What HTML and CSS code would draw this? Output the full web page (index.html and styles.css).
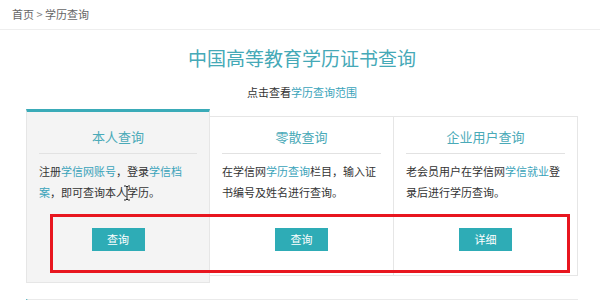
FILE: index.html
```html
<!DOCTYPE html>
<html lang="zh-CN">
<head>
    <meta charset="UTF-8">
    <meta name="viewport" content="width=device-width, initial-scale=1.0">
    <title>学历查询</title>
    <link rel="stylesheet" href="styles.css">
</head>
<body>

<div class="crumb">
    <a href="#">首页</a> &gt; <span>学历查询</span>
</div>

<div class="container">
    <h1>中国高等教育学历证书查询</h1>
    <p class="sub">点击查看<a href="#">学历查询范围</a></p>

    <div class="cards">
        <div class="card active">
            <h2>本人查询</h2>
            <p>注册<a href="#">学信网账号</a>，登录<a href="#">学信档<br>案</a>，即可查询本人学历。</p>
            <a class="btn" href="#">查询</a>
            <!-- text cursor left in the capture -->
            <svg class="cursor" width="8" height="16" viewBox="0 0 8 16">
                <path d="M1 1h2l1 1 1-1h2M4 2v12M1 15h2l1-1 1 1h2" fill="none" stroke="#222" stroke-width="1"/>
            </svg>
        </div>
        <div class="card">
            <h2>零散查询</h2>
            <p>在学信网<a href="#">学历查询</a>栏目，输入证书编号及姓名进行查询。</p>
            <a class="btn" href="#">查询</a>
        </div>
        <div class="card">
            <h2>企业用户查询</h2>
            <p>老会员用户在学信网<a href="#">学信就业</a>登录后进行学历查询。</p>
            <a class="btn" href="#">详细</a>
        </div>
        <div class="mark"></div>
    </div>

    <div class="next"></div>
</div>

</body>
</html>
```

FILE: styles.css
```css
body {
    margin: 0;
    font-family: "Noto Sans CJK SC", "Noto Sans", sans-serif;
    color: #333;
    background: #fff;
}
a {
    color: #3aa3ba;
    text-decoration: none;
}
.crumb {
    height: 29px;
    line-height: 28px;
    padding-left: 12px;
    font-size: 11px;
    color: #888;
    border-bottom: 1px solid #eee;
}
.crumb a,
.crumb span {
    color: #666;
}
.container {
    margin: 0 22px 0 26px;
}
h1 {
    margin: 14px 0 0;
    font-size: 19px;
    line-height: 28px;
    font-weight: normal;
    text-align: center;
    color: #45a9b7;
}
.sub {
    margin: 12px 0 0;
    font-size: 11px;
    line-height: 16px;
    text-align: center;
}
.cards {
    position: relative;
    display: grid;
    grid-template-columns: 1fr 1fr 1fr;
    margin-top: 16px;
}
.card {
    border: 1px solid #e6e6e6;
    padding: 10px 12px 24px;
    background: #fff;
    text-align: center;
}
.card + .card {
    margin-left: -1px;
}
.card.active {
    background: #f4f4f4;
    border-top: 3px solid #3aabb8;
    margin: -7px 0;
    padding-top: 15px;
    padding-bottom: 31px;
    position: relative;
    z-index: 1;
}
.card h2 {
    margin: 0;
    padding-bottom: 6px;
    font-size: 13px;
    line-height: 20px;
    font-weight: normal;
    color: #4aaab8;
    border-bottom: 1px solid #e2e2e2;
}
.card p {
    margin: 7px 0 0;
    height: 42px;
    font-size: 11px;
    line-height: 21px;
    text-align: left;
}
.btn {
    display: inline-block;
    margin-top: 25px;
    width: 53px;
    height: 23px;
    line-height: 23px;
    font-size: 11px;
    color: #fff;
    background: #2eacb6;
}
.cursor {
    position: absolute;
    left: 96px;
    top: 73px;
}
.mark {
    position: absolute;
    left: 24px;
    top: 98px;
    width: 514px;
    height: 53px;
    border: 3px solid #e8161f;
    z-index: 2;
}
.next {
    margin-top: 23px;
    height: 0;
    border-top: 1px solid #eaeaea;
    border-left: 2px solid #3aabb8;
}
```
